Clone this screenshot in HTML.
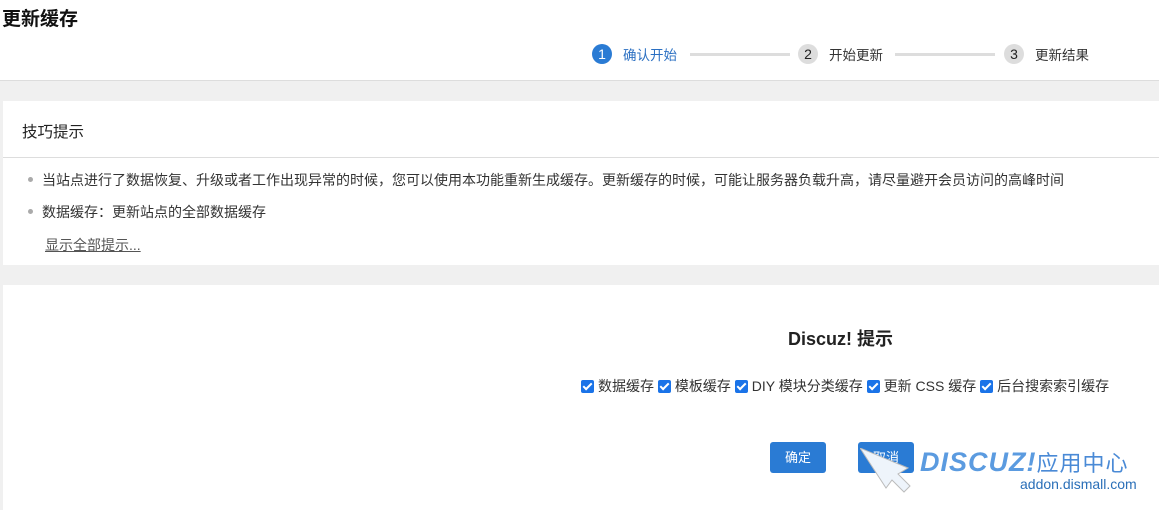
<!DOCTYPE html>
<html><head><meta charset="utf-8"><style>
*{margin:0;padding:0;box-sizing:border-box}
body{width:1159px;height:510px;background:#f0f0f0;font-family:"Liberation Sans","Noto Sans CJK SC",sans-serif;color:#333;position:relative;overflow:hidden;font-size:14px}
.hdr{position:absolute;left:0;top:0;width:1159px;height:81px;background:#fff;border-bottom:1px solid #ddd}
h1{position:absolute;left:2px;top:4px;font-size:19px;font-weight:bold;color:#111}
.st{position:absolute;top:44px;height:20px;display:flex;align-items:center;font-size:13.5px}
.c{width:20px;height:20px;border-radius:50%;background:#ddd;color:#222;text-align:center;line-height:20px;font-size:14px;margin-right:11px}
.ln{position:absolute;top:53px;height:3px;background:#ddd;width:100px}
.p1{position:absolute;left:3px;top:101px;width:1156px;height:164px;background:#fff}
.p1 .t{position:absolute;left:19px;top:19px;font-size:15.5px;color:#222}
.p1 .hr{position:absolute;left:0;top:56px;width:100%;height:1px;background:#ddd}
.li{position:absolute;left:39px;font-size:14px;color:#333;white-space:nowrap}
.li:before{content:"";position:absolute;left:-14px;top:7px;width:5px;height:5px;border-radius:50%;background:#aaa}
.p2{position:absolute;left:3px;top:285px;width:1156px;height:225px;background:#fff}
.cb{display:inline-block;width:13px;height:13px;background:#1a73e8;border-radius:2px;vertical-align:-2px;margin-right:4px;position:relative}
.cb:after{content:"";position:absolute;left:4px;top:1px;width:3px;height:7px;border:solid #fff;border-width:0 2px 2px 0;transform:rotate(45deg)}
.btn{position:absolute;top:442px;width:56px;height:31px;background:#2a7bd4;color:#fff;border-radius:3px;text-align:center;line-height:31px;font-size:13px}
</style></head><body>
<div class="hdr"><h1>更新缓存</h1>
<div class="st" style="left:592px"><div class="c" style="background:#2a7bd4;color:#fff">1</div><span style="color:#2a6fc2">确认开始</span></div>
<div class="ln" style="left:690px"></div>
<div class="st" style="left:798px"><div class="c">2</div><span>开始更新</span></div>
<div class="ln" style="left:895px"></div>
<div class="st" style="left:1004px"><div class="c">3</div><span>更新结果</span></div>
</div>
<div class="p1"><div class="t">技巧提示</div><div class="hr"></div>
<div class="li" style="top:69px">当站点进行了数据恢复、升级或者工作出现异常的时候，您可以使用本功能重新生成缓存。更新缓存的时候，可能让服务器负载升高，请尽量避开会员访问的高峰时间</div>
<div class="li" style="top:101px">数据缓存：更新站点的全部数据缓存</div>
<div style="position:absolute;left:42px;top:134px;text-decoration:underline;color:#555">显示全部提示...</div>
</div>
<div class="p2">
<div style="position:absolute;left:785px;top:40px;font-size:18px;font-weight:bold;color:#222">Discuz! 提示</div>
<div style="position:absolute;left:578px;top:91px;font-size:14px;white-space:nowrap"><span class="cb"></span>数据缓存 <span class="cb"></span>模板缓存 <span class="cb"></span>DIY 模块分类缓存 <span class="cb"></span>更新 CSS 缓存 <span class="cb"></span>后台搜索索引缓存</div>
</div>
<div class="btn" style="left:770px">确定</div>
<div class="btn" style="left:858px">取消</div>
<svg style="position:absolute;left:860px;top:448px" width="60" height="45"><polygon points="0,0 48,20 38,26 50,38 44,44 32,32 26,40" fill="#eef4fb" stroke="#bbb" stroke-width="1"/></svg>
<div style="position:absolute;left:920px;top:446px;font-size:27px;font-weight:bold;font-style:italic;color:#5b9be0;letter-spacing:1px">DISCUZ!<span style="font-style:normal;font-weight:normal;font-size:22px;color:#4a8ad6">应用中心</span></div>
<div style="position:absolute;left:1020px;top:476px;font-size:14px;color:#2a6fb8">addon.dismall.com</div>
</body></html>
